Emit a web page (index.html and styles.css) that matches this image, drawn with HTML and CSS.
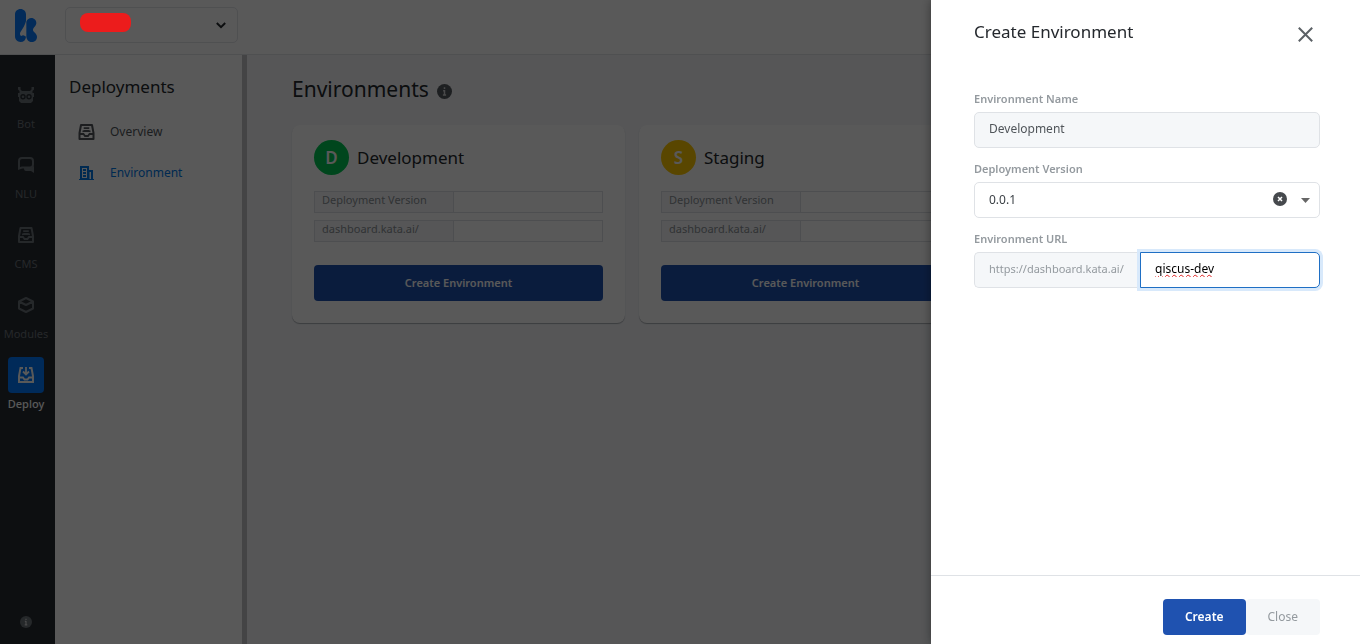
FILE: index.html
```html
<!DOCTYPE html>
<html lang="en">
<head>
<meta charset="utf-8">
<title>Deployments - Environments</title>
<link rel="stylesheet" href="styles.css">
</head>
<body>
<svg class="defs" aria-hidden="true">
  <symbol id="inbox" viewBox="0 0 16 16"><path fill="none" stroke="currentColor" stroke-width="2" stroke-linejoin="round" d="M2.500 1h11L15 9v6H1V9z"/><path fill="none" stroke="currentColor" stroke-width="1.800" d="M1 10h4l1.500 2h3L11 10h4M4 7.500l2-.5h4l2 .5M5.200 4.200h5.600"/></symbol>
  <symbol id="info" viewBox="0 0 16 16"><circle cx="8" cy="8" r="8" fill="currentColor"/><path class="info-mark" stroke-width="1.600" d="M8 3.500v1.800M8 6.500V12M6.500 7.200H8M6.300 11.700h3.400"/></symbol>
</svg>
<div class="app">
  <header class="topbar">
    <a class="logo" href="#" aria-label="Kata"><svg width="22" height="33" viewBox="0 0 66 99"><path fill="currentColor" d="M16.500 0C26 0 33 7 33 16v20C31 46 24 58 16 70c-2 4-1 10 3 11 4-4 9-3 14 2-1 10-7 16-16.500 16S0 92 0 82V16C0 7 7 0 16.500 0z"/><path fill="currentColor" d="M34 38c3-7 8-11 15-11 9 0 15 7 15 15 0 9-10 14-10 21 0 6 12 10 12 21 0 9-7 15-16 15-10 0-16-8-16-18z"/></svg></a>
    <button class="picker" type="button" aria-label="Select project"><svg width="10" height="7" viewBox="0 0 10 7"><path fill="none" stroke="currentColor" stroke-width="2" d="M.8 1 5 5.200 9.200 1"/></svg></button>
  </header>
  <div class="body">
    <nav class="rail" aria-label="Main">
      <a class="rail-item" href="#"><span class="rail-icon"><svg width="16" height="16" viewBox="0 0 16 16"><path fill="currentColor" fill-rule="evenodd" d="M0 0h2.500v2.500L4 4h8l1.500-1.500V0H16v2.500L14.500 4v2H16v4h-1v4l-2 2H3l-2-2v-4H0V6h1.500V4L0 2.500zM5 7a2.700 2.700 0 1 0 0 5.400A2.700 2.700 0 0 0 5 7zm6 0a2.700 2.700 0 1 0 0 5.400A2.700 2.700 0 0 0 11 7z"/><circle cx="5" cy="9.700" r="1.300" fill="currentColor"/><circle cx="11" cy="9.700" r="1.300" fill="currentColor"/></svg></span>Bot</a>
      <a class="rail-item" href="#"><span class="rail-icon"><svg width="16" height="16" viewBox="0 0 16 16"><path fill="none" stroke="currentColor" stroke-width="2" d="M1 11.500V4c0-2 1-3 3-3h8c2 0 3 1 3 3v3.500c0 2-1 3-3 3H4z"/><path fill="currentColor" d="M16 9v7l-3-2H8c-1.500 0-2-1-2-3h7z"/></svg></span>NLU</a>
      <a class="rail-item" href="#"><span class="rail-icon"><svg width="16" height="16"><use href="#inbox"/></svg></span>CMS</a>
      <a class="rail-item" href="#"><span class="rail-icon"><svg width="16" height="16" viewBox="0 0 16 16"><path fill="none" stroke="currentColor" stroke-width="2" stroke-linejoin="round" d="M8 1l7 3.500v7L8 15l-7-3.500v-7zM1 4.500L8 8l7-3.500"/></svg></span>Modules</a>
      <a class="rail-item active" href="#"><span class="rail-icon"><svg width="16" height="16" viewBox="0 0 16 16"><path fill="none" stroke="currentColor" stroke-width="2" d="M5 1H2.500L1 9v6h14V9l-1.500-8H11"/><path fill="none" stroke="currentColor" stroke-width="1.800" d="M1 10.500h4l1.500 2h3l1.500-2h4M8 0v7M5 4.500l3 3 3-3"/></svg></span>Deploy</a>
      <a class="rail-info" href="#" aria-label="Information"><svg width="12" height="12"><use href="#info"/></svg></a>
    </nav>
    <aside class="panel">
      <h2 class="panel-title">Deployments</h2>
      <a class="panel-link" href="#"><svg width="17" height="16"><use href="#inbox"/></svg>Overview</a>
      <a class="panel-link active" href="#"><svg width="17" height="16" viewBox="0 0 17 16"><path fill="currentColor" fill-rule="evenodd" d="M2 1h9v4h4v9h1v1H1v-1h1zm2 2v10h5V3zm7.500 4v7h1.500V7z"/><path fill="currentColor" d="M5 4h3v2H5zM5 7h3v2H5zM5 10h3v2H5z"/></svg>Environment</a>
    </aside>
    <main class="main">
      <h1 class="page-title">Environments <svg width="15" height="15"><use href="#info"/></svg></h1>
      <div class="cards">
        <section class="card">
          <h2 class="card-title"><span class="badge green">D</span>Development</h2>
          <dl class="facts">
            <div class="fact"><dt>Deployment Version</dt><dd></dd></div>
            <div class="fact"><dt>dashboard.kata.ai/</dt><dd></dd></div>
          </dl>
          <button class="btn primary wide" type="button">Create Environment</button>
        </section>
        <section class="card">
          <h2 class="card-title"><span class="badge yellow">S</span>Staging</h2>
          <dl class="facts">
            <div class="fact"><dt>Deployment Version</dt><dd></dd></div>
            <div class="fact"><dt>dashboard.kata.ai/</dt><dd></dd></div>
          </dl>
          <button class="btn primary wide" type="button">Create Environment</button>
        </section>
      </div>
    </main>
  </div>
</div>
<div class="backdrop"></div>
<div class="redaction"></div>
<form class="drawer" role="dialog" aria-labelledby="drawer-title">
  <div class="drawer-head">
    <h2 class="drawer-title" id="drawer-title">Create Environment</h2>
    <button class="close" type="button" aria-label="Close drawer"><svg width="15" height="15" viewBox="0 0 15 15"><path fill="none" stroke="currentColor" stroke-width="2" d="M.8.8l13.400 13.400M14.200.8.8 14.200"/></svg></button>
  </div>
  <div class="drawer-body">
    <div class="field">
      <label for="name">Environment Name</label>
      <input class="control muted" id="name" type="text" value="Development" readonly>
    </div>
    <div class="field">
      <label for="version">Deployment Version</label>
      <div class="select-wrap">
        <select class="control" id="version"><option>0.0.1</option></select>
        <button class="clear" type="button" aria-label="Clear version"><svg width="14" height="14" viewBox="0 0 14 14"><circle cx="7" cy="7" r="7" fill="currentColor"/><path stroke="#fff" stroke-width="1.500" d="M5 5l4 4M9 5L5 9"/></svg></button>
        <svg class="caret" width="9" height="5" viewBox="0 0 9 5"><path fill="currentColor" d="M0 0h9L4.500 5z"/></svg>
      </div>
    </div>
    <div class="field">
      <label for="url">Environment URL</label>
      <div class="url-group">
        <span class="prefix">https://dashboard.kata.ai/</span>
        <input class="control focused" id="url" type="text" value="qiscus-dev" spellcheck="false">
      </div>
    </div>
  </div>
  <div class="drawer-foot">
    <button class="btn primary" type="submit">Create</button>
    <button class="btn plain" type="button">Close</button>
  </div>
</form>
</body>
</html>
```
FILE: styles.css
```css
* { box-sizing: border-box; }
body {
  margin: 0;
  font: 12px/16px "Noto Sans", sans-serif;
  color: #24282d;
  background: #f6f7fa;
}
h1, h2, dl, dd { margin: 0; font-weight: 400; }
a { color: inherit; text-decoration: none; }
button, input, select { font: inherit; color: inherit; }
svg { display: block; flex: none; }
.defs { position: absolute; width: 0; height: 0; }
.info-mark { stroke: #d0d2d4; fill: none; }

.app { display: flex; flex-direction: column; min-height: 100vh; }
.topbar {
  display: flex;
  align-items: center;
  height: 55px;
  padding: 0 15px 4px;
  gap: 28px;
  background: #fff;
  border-bottom: 1px solid #e2e4e8;
}
.logo { color: #0a7cff; }
.picker {
  display: flex;
  align-items: center;
  justify-content: flex-end;
  width: 173px;
  height: 36px;
  padding: 0 11px;
  border: 1px solid #e2e4e8;
  border-radius: 5px;
  background: #fff;
}
.body { display: flex; flex: 1; }

.rail {
  display: flex;
  flex-direction: column;
  align-items: center;
  width: 55px;
  padding: 22px 3px 16px 0;
  background: #262c33;
  color: #6c7278;
}
.rail-item {
  display: flex;
  flex-direction: column;
  align-items: center;
  gap: 3px;
  height: 70px;
  font-size: 11px;
}
.rail-icon {
  display: grid;
  place-items: center;
  width: 36px;
  height: 36px;
  border-radius: 4px;
}
.rail-item.active { color: #fff; font-weight: 500; }
.rail-item.active .rail-icon { background: #0078ff; }
.rail-info { margin-top: auto; }
.rail .info-mark { stroke: #262c33; }

.panel {
  width: 192px;
  padding: 22px 14px;
  background: #fff;
  border-right: 5px solid #c4c4c6;
}
.panel-title { margin-bottom: 23px; font-size: 17px; line-height: 20px; }
.panel-link {
  display: flex;
  align-items: center;
  gap: 15px;
  height: 24px;
  margin-bottom: 17px;
  padding-left: 9px;
  color: #50555a;
}
.panel-link.active { color: #0078e8; }

.main { flex: 1; padding: 19px 41px 20px 45px; }
.page-title {
  display: flex;
  align-items: center;
  gap: 8px;
  margin-bottom: 21px;
  font-size: 21px;
  line-height: 30px;
}
.page-title svg { color: #55595e; margin-top: 4px; }
.cards { display: grid; grid-template-columns: repeat(3, 1fr); gap: 14px; }
.card {
  padding: 15px 22px 22px;
  background: #fff;
  border-radius: 8px;
  box-shadow: 0 1px 1px #a8acb2;
}
.card-title {
  display: flex;
  align-items: center;
  gap: 8px;
  margin-bottom: 16px;
  font-size: 17px;
  line-height: 24px;
}
.badge {
  display: grid;
  place-items: center;
  width: 35px;
  height: 35px;
  border-radius: 50%;
  color: #fff;
  font-weight: 600;
}
.green { background: #00c853; }
.yellow { background: #ffc800; }
.facts { display: grid; gap: 7px; margin-bottom: 23px; }
.fact {
  display: flex;
  height: 22px;
  border: 1px solid #dcdfe4;
  font-size: 11px;
  line-height: 16px;
}
.fact dt {
  width: 139px;
  padding-left: 7px;
  border-right: 1px solid #dcdfe4;
  background: #f6f7fa;
  color: #8c9196;
}
.btn {
  height: 36px;
  padding: 0 22px;
  border: 0;
  border-radius: 4px;
}
.primary { background: #1f52b0; color: #fff; font-weight: 600; }
.plain { background: #f5f7f9; color: #949a9f; }
.wide { width: 100%; font-size: 11px; }

.backdrop { position: fixed; inset: 0; background: rgba(0, 0, 0, .65); }
.redaction {
  position: absolute;
  left: 80px;
  top: 13px;
  width: 51px;
  height: 19px;
  border-radius: 8px;
  background: #ec1c1c;
}

.drawer {
  position: fixed;
  inset: 0 0 0 auto;
  display: flex;
  flex-direction: column;
  width: 429px;
  background: #fff;
  box-shadow: 0 0 10px rgba(0, 0, 0, .4);
}
.drawer-head {
  display: flex;
  justify-content: space-between;
  align-items: flex-start;
  padding: 20px 47px 0 43px;
}
.drawer-title { font-size: 17px; line-height: 24px; }
.close, .clear { padding: 0; border: 0; background: none; }
.close { margin-top: 7px; color: #5b6065; }
.drawer-body { flex: 1; padding: 47px 40px 0 43px; }
.field { margin-bottom: 13px; }
.field label {
  display: block;
  margin-bottom: 5px;
  font-size: 11px;
  font-weight: 600;
  color: #949a9f;
}
.control {
  display: block;
  width: 100%;
  height: 36px;
  padding: 0 14px;
  border: 1px solid #dfe2e6;
  border-radius: 5px;
  background: #fff;
  color: #3c4146;
  appearance: none;
  outline: 0;
}
input.control { padding-bottom: 3px; }
.muted { background: #f5f7f9; color: #50555a; }
.select-wrap { position: relative; }
.clear { position: absolute; right: 33px; top: 10px; color: #46494d; }
.caret { position: absolute; right: 10px; top: 16px; color: #666; }
.url-group { display: flex; }
.prefix {
  flex: none;
  width: 166px;
  height: 36px;
  padding-left: 14px;
  border: 1px solid #dfe2e6;
  border-right: 0;
  border-radius: 5px 0 0 5px;
  background: #f5f7f9;
  color: #949a9f;
  font-size: 11px;
  line-height: 32px;
}
.control.focused {
  flex: 1;
  min-width: 0;
  border-color: #1f6fc4;
  border-radius: 0 5px 5px 0;
  box-shadow: 0 0 0 3px #d8e9fb;
  color: #000;
  text-decoration: underline wavy #e02020 1px;
}
.drawer-foot {
  display: flex;
  justify-content: flex-end;
  padding: 23px 40px 9px;
  border-top: 1px solid #dfe2e6;
}
```
